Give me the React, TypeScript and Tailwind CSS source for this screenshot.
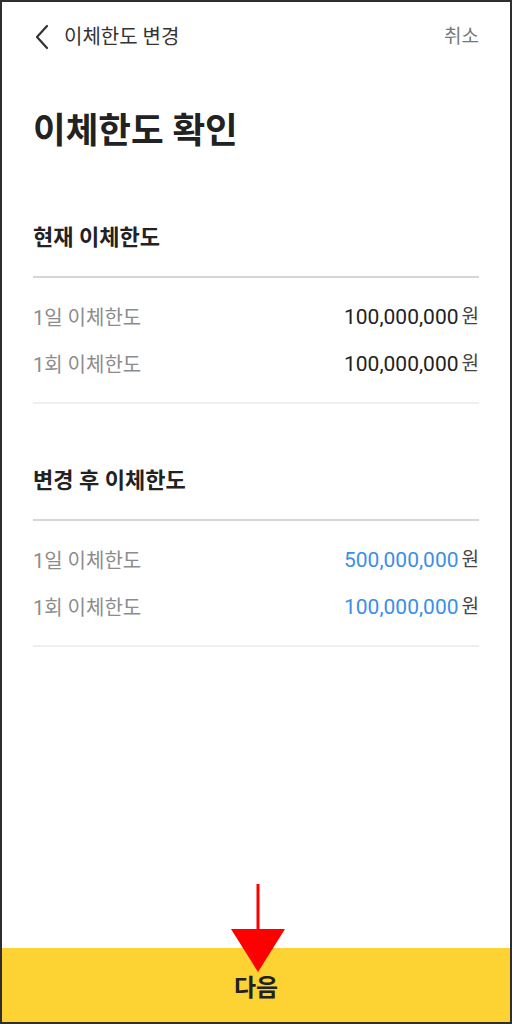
import React from 'react'

const font = { fontFamily: 'Roboto, "Noto Sans CJK KR", "Noto Sans", sans-serif' }

type Row = { label: string; amount: string }

const LimitSection = ({
  title,
  rows,
  highlight,
  className,
}: {
  title: string
  rows: Row[]
  highlight?: boolean
  className?: string
}) => (
  <div className={className}>
    <h2 className="text-[22px] leading-[30px] font-bold text-[#222]">{title}</h2>
    <div className="mt-[23px] h-[2px] bg-[#d6d6d6]" />
    <div className="pt-[16px]">
      {rows.map((r) => (
        <div key={r.label} className="h-[47px] flex items-center justify-between">
          <span className="text-[20px] text-[#8c8c8c]">{r.label}</span>
          <span className="flex items-center">
            <span className={`text-[21px] ${highlight ? 'text-[#3b8fe6]' : 'text-[#222]'}`}>
              {r.amount}
            </span>
            <span className="ml-[3px] text-[19px] text-[#444]">원</span>
          </span>
        </div>
      ))}
    </div>
    <div className="mt-[14px] h-[2px] bg-[#efefef]" />
  </div>
)

const App: React.FC = () => {
  return (
    <div
      style={font}
      className="relative w-[512px] h-[1024px] box-border border-2 border-[#2e2e2e] bg-white flex flex-col overflow-hidden"
    >
      <div className="flex-1 px-[31px]">
        {/* header */}
        <div className="h-[70px] flex items-center justify-between">
          <div className="flex items-center">
            <svg width="16" height="26" viewBox="0 0 16 26" className="ml-[1px]">
              <path d="M13 2 L3 13 L13 24" fill="none" stroke="#333" strokeWidth="2.2" strokeLinecap="round" strokeLinejoin="round" />
            </svg>
            <span className="ml-[14px] text-[20px] text-[#333]">이체한도 변경</span>
          </div>
          <span className="text-[19px] text-[#777]">취소</span>
        </div>

        <h1 className="mt-[36px] text-[35.5px] leading-[46px] font-bold text-[#222]">이체한도 확인</h1>

        <LimitSection
          className="mt-[69px]"
          title="현재 이체한도"
          rows={[
            { label: '1일 이체한도', amount: '100,000,000' },
            { label: '1회 이체한도', amount: '100,000,000' },
          ]}
        />

        <LimitSection
          className="mt-[62px]"
          title="변경 후 이체한도"
          highlight
          rows={[
            { label: '1일 이체한도', amount: '500,000,000' },
            { label: '1회 이체한도', amount: '100,000,000' },
          ]}
        />
      </div>

      <button className="h-[74px] w-full pt-[5px] bg-[#fdd333] text-[24px] font-bold text-[#222]">다음</button>

      {/* red annotation arrow */}
      <svg
        className="absolute left-[226px] top-[880px]"
        width="60"
        height="92"
        viewBox="0 0 60 92"
      >
        <rect x="28.5" y="2" width="3" height="50" fill="#ff0000" />
        <polygon points="3,47 57,47 30,90" fill="#ff0000" />
      </svg>
    </div>
  )
}

export default App
